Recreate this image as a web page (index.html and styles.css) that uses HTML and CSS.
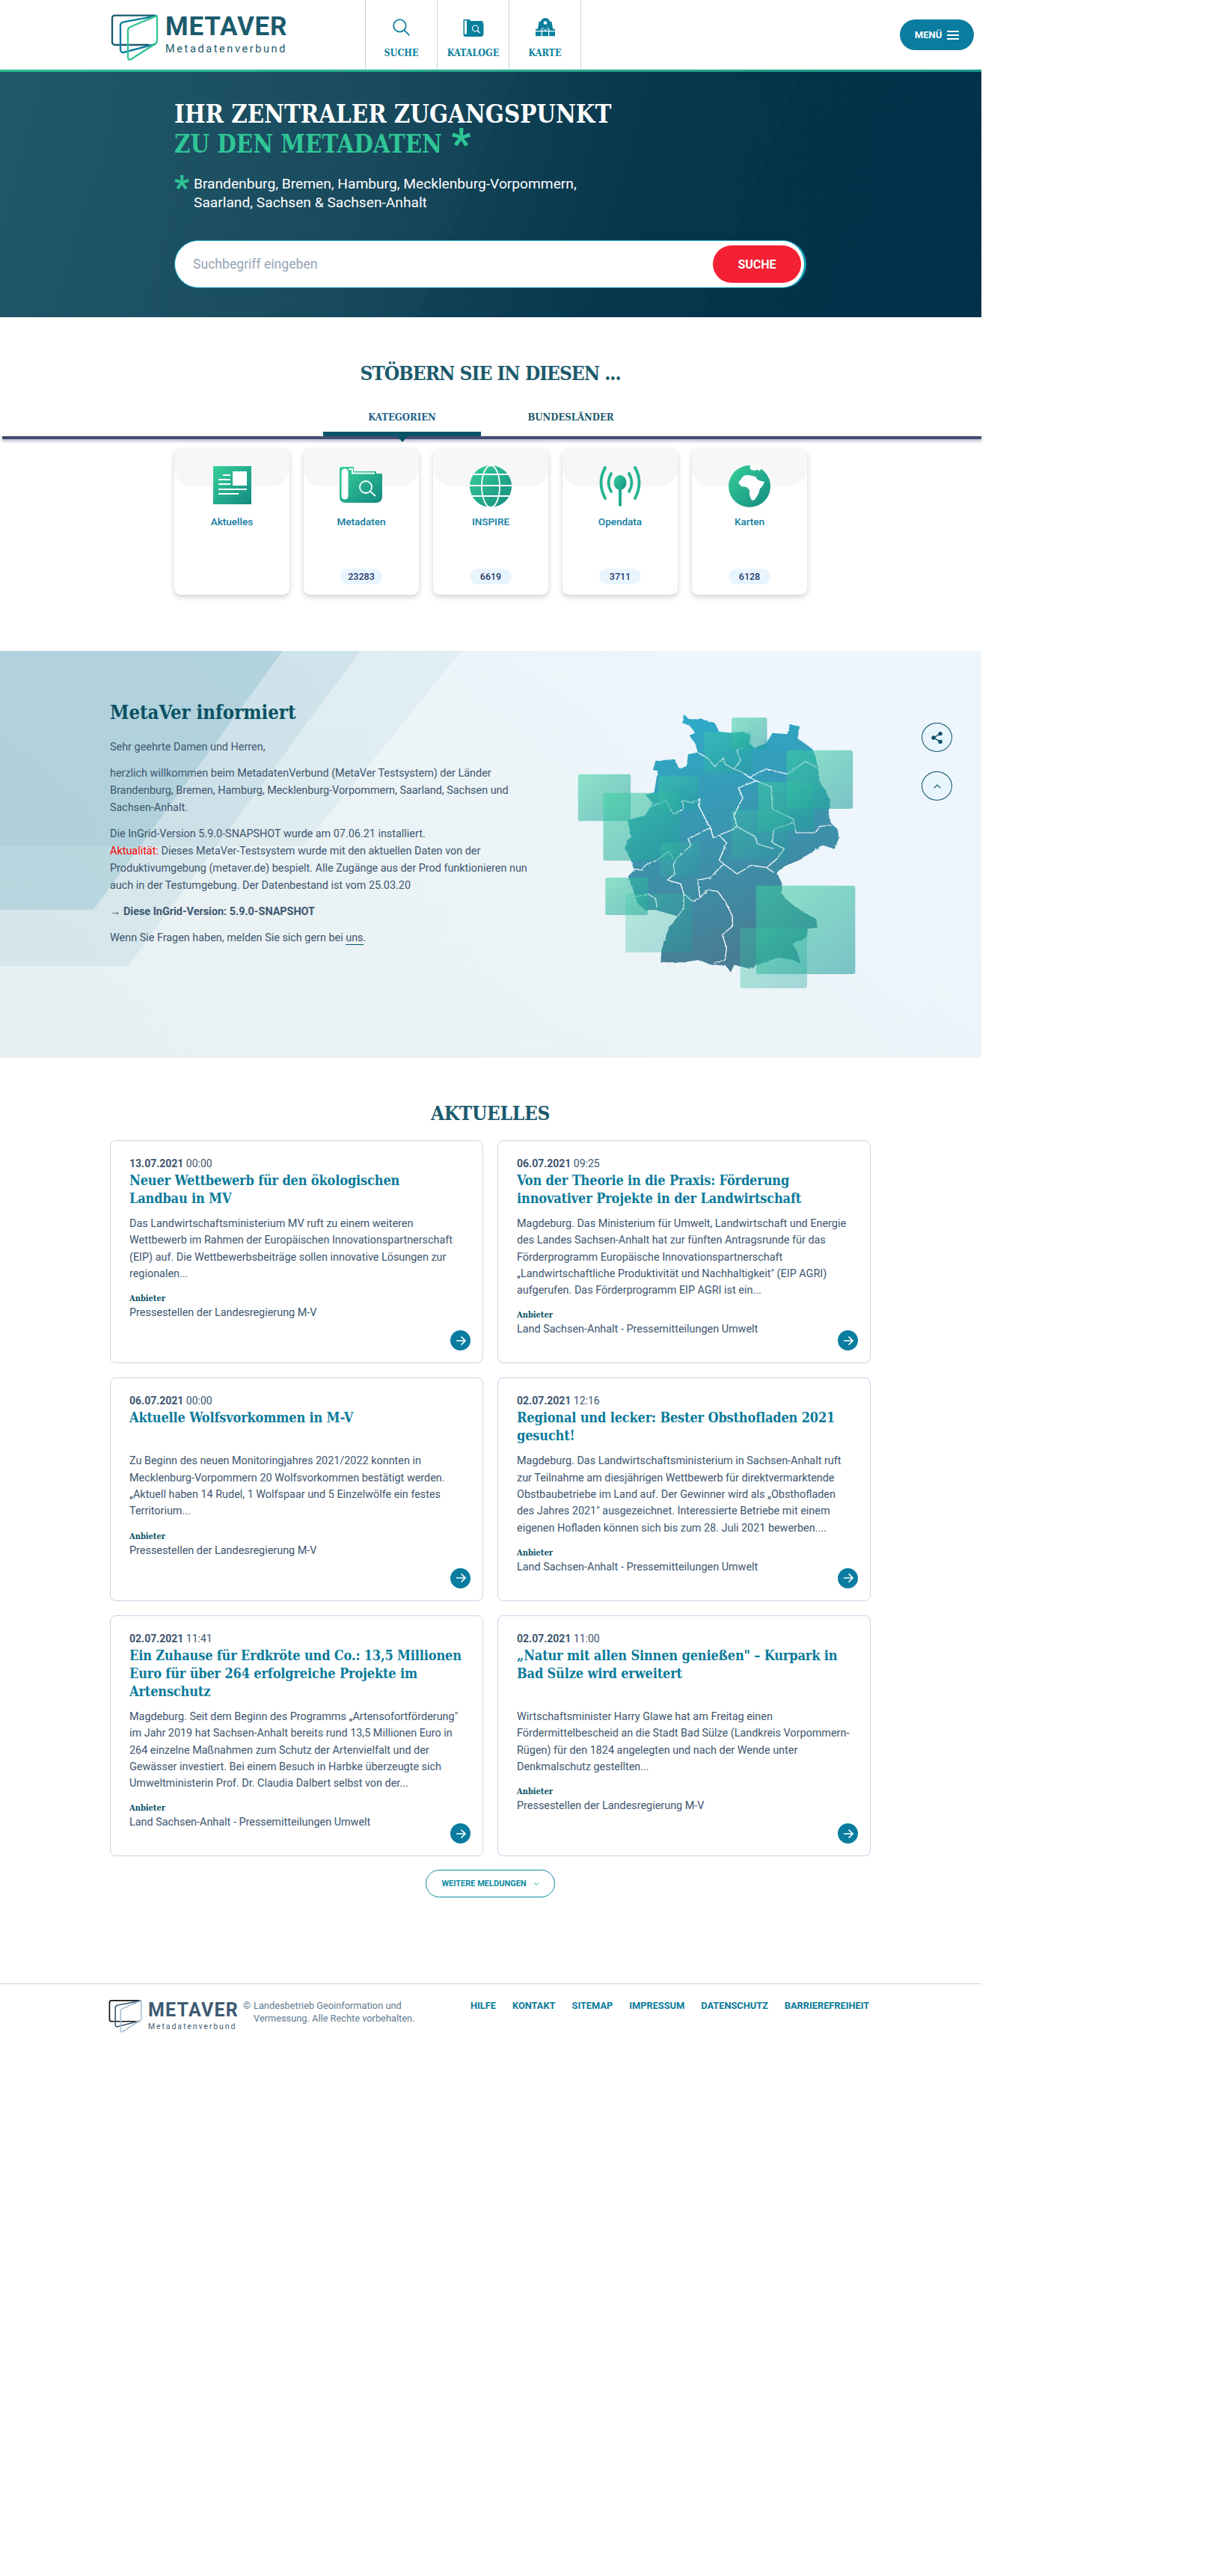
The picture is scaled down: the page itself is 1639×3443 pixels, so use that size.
FILE: index.html
```html
<!DOCTYPE html>
<html lang="de">
<head>
<meta charset="utf-8">
<title>MetaVer</title>
<link rel="stylesheet" href="styles.css">
</head>
<body>
<svg class="defs" aria-hidden="true"><defs>
<linearGradient id="g" x1="0" y1="0" x2="1" y2="1"><stop offset="0" stop-color="#38d09a"/><stop offset="1" stop-color="#128a80"/></linearGradient>
<linearGradient id="sq" x1="0" y1="0" x2="1" y2="1"><stop offset="0" stop-color="#3fd3a2"/><stop offset="1" stop-color="#1b9a9a"/></linearGradient>
<linearGradient id="de" gradientUnits="userSpaceOnUse" x1="420" y1="200" x2="700" y2="1120"><stop offset="0" stop-color="#2eaac8"/><stop offset="1" stop-color="#487d94"/></linearGradient>
<filter id="rough" x="-5%" y="-5%" width="110%" height="110%"><feTurbulence type="fractalNoise" baseFrequency="0.09" numOctaves="2" seed="4"/><feDisplacementMap in="SourceGraphic" scale="8"/></filter>
</defs></svg>
<div class="page">
<header class="top">
  <a class="logo">
    <svg class="logo-mark" viewBox="50 50 195 195"><path class="lm-dark" d="M232 58H68Q56 58 56 70V164Q56 176 68 176H205"/><path class="lm-blue" d="M232 60L102 84Q89 87 89 98V194Q89 208 102 206L232 172"/><path class="lm-green" d="M232 60L128 104Q119 108 119 118V226Q119 240 132 233L228 172Q236 167 236 158V68Q236 56 232 60Z"/></svg>
    <span class="logo-text"><b>METAVER</b><small>Metadatenverbund</small></span>
  </a>
  <nav class="mainnav">
    <a class="navitem"><svg viewBox="0 0 30 30" class="ni"><circle cx="12" cy="12" r="9.500" class="ni-line"/><path d="M19 19L27 27" class="ni-line"/></svg><span>SUCHE</span></a>
    <a class="navitem"><svg viewBox="0 0 27 26" class="ni"><path class="ni-fill" d="M0 2H9V4H25Q26 4 26 5V7H27V21Q27 25 23 25H3Q0 25 0 22Z"/><path class="ni-w" d="M1.500 3.500H4.500V21Q3 22 1.500 21.500Z"/><circle cx="16" cy="14" r="4" fill="none" stroke="#fff" stroke-width="1.200"/><path d="M19 17L22 20" stroke="#fff" stroke-width="1.200"/></svg><span>KATALOGE</span></a>
    <a class="navitem"><svg viewBox="0 0 28 28" class="ni"><path class="ni-fill" d="M5 5H8L10 14L14 19L18 14L20 5H23L25 16H28V26H0V16H3Z"/><path class="ni-fill" d="M14 0A7 7 0 0 1 21 7C21 11 16 15 14 18C12 15 7 11 7 7A7 7 0 0 1 14 0Z"/><circle cx="14" cy="7" r="2.500" fill="#fff"/><path d="M0 19H28M9 15V27M19 15V27" stroke="#fff" stroke-width="1.300"/></svg><span>KARTE</span></a>
  </nav>
  <button class="menu">MENÜ <span class="burger"><i></i><i></i><i></i></span></button>
</header>

<section class="hero">
  <h1>IHR ZENTRALER ZUGANGSPUNKT<br><em>ZU DEN METADATEN <span class="star">*</span></em></h1>
  <div class="sub"><span class="substar">*</span><p>Brandenburg, Bremen, Hamburg, Mecklenburg-Vorpommern,<br>Saarland, Sachsen &amp; Sachsen-Anhalt</p></div>
  <form class="search"><span class="ph">Suchbegriff eingeben</span><span class="go">SUCHE</span></form>
</section>

<section class="browse">
  <h2 class="sectitle">STÖBERN SIE IN DIESEN ...</h2>
  <div class="tabs"><a class="tab active">KATEGORIEN</a><a class="tab">BUNDESLÄNDER</a></div>
  <div class="rule"></div>
  <div class="cats">
    <a class="cat"><svg class="ci" viewBox="0 0 60 56"><rect x="5" y="1" width="51" height="51" fill="url(#g)"/><rect x="31" y="8" width="19" height="19" fill="#fff"/><path d="M18 13H28M12 19H28M12 25H28M12 32H50M12 38H39" stroke="#fff" stroke-width="2" fill="none"/></svg><span class="cl">Aktuelles</span></a>
    <a class="cat"><svg class="ci" viewBox="0 0 60 56"><path fill="url(#g)" d="M1 4Q1 2 3 2H20V8H50V11H58V41Q58 50 49 50H9Q1 50 1 42Z"/><rect x="3.500" y="4.500" width="9" height="41" rx="4.500" fill="#fff"/><path d="M13 5H18V10.500H48" stroke="#fff" stroke-width="2" fill="none"/><circle cx="36" cy="29" r="8" fill="none" stroke="#fff" stroke-width="1.800"/><path d="M42 35L49 41" stroke="#fff" stroke-width="1.800"/></svg><span class="cl">Metadaten</span><span class="count">23283</span></a>
    <a class="cat"><svg class="ci" viewBox="0 0 60 56"><circle cx="30" cy="28" r="28" fill="url(#g)"/><ellipse cx="30" cy="28" rx="12" ry="28" fill="none" stroke="#fff" stroke-width="1.800"/><path d="M3 12H57M1 27H59M3 41H57" stroke="#fff" stroke-width="1.800"/></svg><span class="cl">INSPIRE</span><span class="count">6619</span></a>
    <a class="cat"><svg class="ci" viewBox="0 0 60 56"><ellipse cx="30" cy="23" rx="8.500" ry="10" fill="url(#g)"/><path d="M30 28V53" stroke="#22ab8e" stroke-width="4" stroke-linecap="round"/><g fill="none" stroke="#26b390" stroke-width="3.800" stroke-linecap="round"><path d="M18 11Q11 23 18 35"/><path d="M42 11Q49 23 42 35"/><path d="M10 3Q-1 23 10 44"/><path d="M50 3Q61 23 50 44"/></g></svg><span class="cl">Opendata</span><span class="count">3711</span></a>
    <a class="cat"><svg class="ci" viewBox="0 0 60 56"><circle cx="30" cy="28" r="28" fill="url(#g)"/><path fill="#fff" d="M32 -1Q29 3 32 6L37 7Q42 4 43 8L46 4L44 -1Z"/><path fill="#fff" d="M22 14Q27 12 33 14L38 15Q40 20 46 21L50 22Q48 28 44 31L42 38L37 46L33 47L30 40L30 33L26 29L19 28L15 23Z"/></svg><span class="cl">Karten</span><span class="count">6128</span></a>
  </div>
</section>

<section class="info">
  <svg class="info-bg" viewBox="0 0 1312 544" preserveAspectRatio="none" aria-hidden="true">
    <polygon points="0,0 617,0 405,261 0,261" fill="#0a7896" opacity=".055"/>
    <polygon points="0,0 482,0 171,421 0,421" fill="#0a7896" opacity=".08"/>
    <polygon points="0,0 378,0 125,346 0,346" fill="#0a7896" opacity=".14"/>
  </svg>
  <div class="info-text">
    <h2>MetaVer informiert</h2>
    <p>Sehr geehrte Damen und Herren,</p>
    <p>herzlich willkommen beim MetadatenVerbund (MetaVer Testsystem) der Länder Brandenburg, Bremen, Hamburg, Mecklenburg-Vorpommern, Saarland, Sachsen und Sachsen-Anhalt.</p>
    <p>Die InGrid-Version 5.9.0-SNAPSHOT wurde am 07.06.21 installiert.<br><span class="red">Aktualität:</span> Dieses MetaVer-Testsystem wurde mit den aktuellen Daten von der Produktivumgebung (metaver.de) bespielt. Alle Zugänge aus der Prod funktionieren nun auch in der Testumgebung. Der Datenbestand ist vom 25.03.20</p>
    <p><span class="arr">→</span> <strong>Diese InGrid-Version: 5.9.0-SNAPSHOT</strong></p>
    <p>Wenn Sie Fragen haben, melden Sie sich gern bei <a class="ul">uns</a>.</p>
  </div>
  <svg class="map" viewBox="0 100 1100 1200" preserveAspectRatio="none" aria-label="Karte der Bundesländer">
    <g filter="url(#rough)">
      <path fill="url(#de)" d="M440 165L436 200L462 212L478 240L458 250L478 280L488 318L455 325L450 372L425 385L410 345L345 352L336 388L352 392L340 478L310 488L335 520L310 570L250 590L262 650L240 700L262 750L272 790L252 815L272 880L285 925L310 950L345 950L420 975L390 1020L365 1110L362 1160L440 1160L490 1150L535 1170L580 1170L600 1200L610 1170L665 1185L700 1165L760 1140L810 1150L835 1165L825 1120L808 1085L855 1060L860 1025L892 1020L888 985L855 965L815 935L785 905L770 880L775 850L755 800L780 775L830 750L870 720L910 690L950 705L965 660L960 625L940 605L930 570L935 510L920 470L900 440L895 385L885 330L875 305L850 282L825 262L832 215L800 205L790 245L740 240L720 280L680 300L660 280L665 250L640 235L600 240L560 235L545 200L500 185L458 185Z"/>
      <g fill="none" stroke="#fff" stroke-width="3.600" opacity=".95" class="borders">
        <path d="M490 320L520 340L545 375L575 340L580 365L610 385L635 395L665 420L680 405L720 385L790 405L850 355L880 370L895 385"/>
        <path d="M610 385L632 350L620 310L640 300"/>
        <path d="M665 420L685 432L625 460L640 500L610 570L620 615L600 630L560 650L540 660L530 620L520 600L490 530L495 505L470 520L435 510L440 545L405 565L380 510L320 540"/>
        <path d="M685 432L735 455L740 545L810 585L820 640L885 640L900 615L940 610"/>
        <path d="M810 600L745 625L740 680L780 705L755 745L720 780L745 800"/>
        <path d="M620 615L680 655L690 685L745 705"/>
        <path d="M560 650L585 680L560 750L575 765L620 805L670 770L720 780"/>
        <path d="M530 620L455 665L465 690L415 745L405 770L410 805L385 830L430 845L440 885L470 915L495 900L487 830L530 820L575 765"/>
        <path d="M405 745L390 715L350 750L310 770L300 790L270 785"/>
        <path d="M495 900L520 870L555 875L580 915L605 975L605 1015L570 1050L585 1100L580 1150L540 1165"/>
        <path d="M440 885L440 940L420 975"/>
        <path d="M270 900L320 885L345 905L350 940"/>
      </g>
    </g>
    <g fill="url(#sq)">
      <rect x="602" y="178" width="120" height="128" rx="8" opacity=".55"/>
      <rect x="510" y="237" width="158" height="165" rx="8" opacity=".4"/>
      <rect x="789" y="309" width="223" height="235" rx="8" opacity=".55"/>
      <rect x="692" y="437" width="188" height="197" rx="8" opacity=".5"/>
      <rect x="83" y="405" width="178" height="188" rx="8" opacity=".55"/>
      <rect x="168" y="480" width="258" height="272" rx="8" opacity=".55"/>
      <rect x="355" y="411" width="133" height="135" rx="8" opacity=".45"/>
      <rect x="362" y="680" width="130" height="135" rx="8" opacity=".3"/>
      <rect x="603" y="548" width="188" height="197" rx="8" opacity=".3"/>
      <rect x="175" y="820" width="144" height="150" rx="8" opacity=".55"/>
      <rect x="243" y="885" width="225" height="235" rx="8" opacity=".32"/>
      <rect x="685" y="852" width="335" height="355" rx="8" opacity=".55"/>
      <rect x="631" y="1023" width="226" height="240" rx="8" opacity=".35"/>
    </g>
  </svg>
  <a class="fab fab-share"><svg viewBox="0 0 20 20" width="18" height="18"><path d="M5 10L14 4M5 10L14 16" stroke="#0a4f68" stroke-width="1.500"/><circle cx="4.500" cy="10" r="3" fill="#0a4f68"/><circle cx="14.500" cy="4" r="3" fill="#0a4f68"/><circle cx="14.500" cy="16" r="3" fill="#0a4f68"/></svg></a>
  <a class="fab fab-up"><svg viewBox="0 0 14 10" width="12" height="8"><path d="M1.500 8L7 2.500L12.500 8" fill="none" stroke="#0a4f68" stroke-width="1.500"/></svg></a>
</section>

<section class="news">
  <h2 class="sectitle news-title">AKTUELLES</h2>
  <div class="newsgrid">
    <article class="nc"><div class="date"><b>13.07.2021</b> 00:00</div><h3>Neuer Wettbewerb für den ökologischen<br>Landbau in MV</h3><p class="txt">Das Landwirtschaftsministerium MV ruft zu einem weiteren Wettbewerb im Rahmen der Europäischen Innovationspartnerschaft (EIP) auf. Die Wettbewerbsbeiträge sollen innovative Lösungen zur regionalen...</p><div class="lab">Anbieter</div><div class="prov">Pressestellen der Landesregierung M-V</div><a class="arrow"><svg viewBox="0 0 16 16" width="16" height="16"><path d="M2 8H14M8.500 2.500L14 8L8.500 13.500" fill="none" stroke="#fff" stroke-width="1.700"/></svg></a></article>
    <article class="nc"><div class="date"><b>06.07.2021</b> 09:25</div><h3>Von der Theorie in die Praxis: Förderung<br>innovativer Projekte in der Landwirtschaft</h3><p class="txt">Magdeburg. Das Ministerium für Umwelt, Landwirtschaft und Energie des Landes Sachsen-Anhalt hat zur fünften Antragsrunde für das Förderprogramm Europäische Innovationspartnerschaft „Landwirtschaftliche Produktivität und Nachhaltigkeit" (EIP AGRI) aufgerufen. Das Förderprogramm EIP AGRI ist ein...</p><div class="lab">Anbieter</div><div class="prov">Land Sachsen-Anhalt - Pressemitteilungen Umwelt</div><a class="arrow"><svg viewBox="0 0 16 16" width="16" height="16"><path d="M2 8H14M8.500 2.500L14 8L8.500 13.500" fill="none" stroke="#fff" stroke-width="1.700"/></svg></a></article>
    <article class="nc"><div class="date"><b>06.07.2021</b> 00:00</div><h3>Aktuelle Wolfsvorkommen in M-V</h3><p class="txt">Zu Beginn des neuen Monitoringjahres 2021/2022 konnten in Mecklenburg-Vorpommern 20 Wolfsvorkommen bestätigt werden. „Aktuell haben 14 Rudel, 1 Wolfspaar und 5 Einzelwölfe ein festes Territorium...</p><div class="lab">Anbieter</div><div class="prov">Pressestellen der Landesregierung M-V</div><a class="arrow"><svg viewBox="0 0 16 16" width="16" height="16"><path d="M2 8H14M8.500 2.500L14 8L8.500 13.500" fill="none" stroke="#fff" stroke-width="1.700"/></svg></a></article>
    <article class="nc"><div class="date"><b>02.07.2021</b> 12:16</div><h3>Regional und lecker: Bester Obsthofladen 2021<br>gesucht!</h3><p class="txt">Magdeburg. Das Landwirtschaftsministerium in Sachsen-Anhalt ruft zur Teilnahme am diesjährigen Wettbewerb für direktvermarktende Obstbaubetriebe im Land auf. Der Gewinner wird als „Obsthofladen des Jahres 2021" ausgezeichnet. Interessierte Betriebe mit einem eigenen Hofladen können sich bis zum 28. Juli 2021 bewerben....</p><div class="lab">Anbieter</div><div class="prov">Land Sachsen-Anhalt - Pressemitteilungen Umwelt</div><a class="arrow"><svg viewBox="0 0 16 16" width="16" height="16"><path d="M2 8H14M8.500 2.500L14 8L8.500 13.500" fill="none" stroke="#fff" stroke-width="1.700"/></svg></a></article>
    <article class="nc tall"><div class="date"><b>02.07.2021</b> 11:41</div><h3>Ein Zuhause für Erdkröte und Co.: 13,5 Millionen<br>Euro für über 264 erfolgreiche Projekte im<br>Artenschutz</h3><p class="txt">Magdeburg. Seit dem Beginn des Programms „Artensofortförderung" im Jahr 2019 hat Sachsen-Anhalt bereits rund 13,5 Millionen Euro in 264 einzelne Maßnahmen zum Schutz der Artenvielfalt und der Gewässer investiert. Bei einem Besuch in Harbke überzeugte sich Umweltministerin Prof. Dr. Claudia Dalbert selbst von der...</p><div class="lab">Anbieter</div><div class="prov">Land Sachsen-Anhalt - Pressemitteilungen Umwelt</div><a class="arrow"><svg viewBox="0 0 16 16" width="16" height="16"><path d="M2 8H14M8.500 2.500L14 8L8.500 13.500" fill="none" stroke="#fff" stroke-width="1.700"/></svg></a></article>
    <article class="nc tall"><div class="date"><b>02.07.2021</b> 11:00</div><h3>„Natur mit allen Sinnen genießen" – Kurpark in<br>Bad Sülze wird erweitert</h3><p class="txt">Wirtschaftsminister Harry Glawe hat am Freitag einen Fördermittelbescheid an die Stadt Bad Sülze (Landkreis Vorpommern-Rügen) für den 1824 angelegten und nach der Wende unter Denkmalschutz gestellten...</p><div class="lab">Anbieter</div><div class="prov">Pressestellen der Landesregierung M-V</div><a class="arrow"><svg viewBox="0 0 16 16" width="16" height="16"><path d="M2 8H14M8.500 2.500L14 8L8.500 13.500" fill="none" stroke="#fff" stroke-width="1.700"/></svg></a></article>
  </div>
  <a class="more">WEITERE MELDUNGEN <svg viewBox="0 0 10 8" width="8" height="6"><path d="M1 1.500L5 6L9 1.500" fill="none" stroke="#0a8aa0" stroke-width="1.100"/></svg></a>
</section>

<footer class="foot">
  <a class="logo flogo">
    <svg class="logo-mark" viewBox="50 50 195 195"><path class="lm-k" d="M232 58H68Q56 58 56 70V164Q56 176 68 176H205"/><path class="lm-s" d="M232 60L102 84Q89 87 89 98V194Q89 208 102 206L232 172"/><path class="lm-l" d="M232 60L128 104Q119 108 119 118V226Q119 240 132 233L228 172Q236 167 236 158V68Q236 56 232 60Z"/></svg>
    <span class="logo-text"><b>METAVER</b><small>Metadatenverbund</small></span>
  </a>
  <p class="copy"><span class="c">©</span> Landesbetrieb Geoinformation und Vermessung. Alle Rechte vorbehalten.</p>
  <nav class="fnav"><a>HILFE</a><a>KONTAKT</a><a>SITEMAP</a><a>IMPRESSUM</a><a>DATENSCHUTZ</a><a>BARRIEREFREIHEIT</a></nav>
</footer>
</div>
</body>
</html>
```
FILE: styles.css
```css
*{box-sizing:border-box}
html,body{margin:0;padding:0;background:#fff}
body{font-family:Roboto,"Liberation Sans",sans-serif;color:#3b566c;font-size:14.400px}
a{color:inherit;text-decoration:none}
h1,h2,h3,p{margin:0}
.defs{width:0;height:0;display:block}
.page{width:1312px;min-height:3443px}

/* header */
.top{height:96px;display:flex;border-bottom:3px solid;border-image:linear-gradient(90deg,#2fbf94,#1a9a88) 1;position:relative}
.logo{display:flex;align-items:flex-start}
.top .logo{margin:18px 0 0 148px;width:340px}
.logo-mark{width:65px;height:65px;flex:none;fill:none;stroke-width:7;stroke-linejoin:round}
.lm-dark{stroke:#1c5a6c}.lm-blue{stroke:#0a7da0}.lm-green{stroke:#30c596}
.lm-k{stroke:#111}.lm-s{stroke:#3e5a72}.lm-l{stroke:#a9c0d4}
.logo-text{display:flex;flex-direction:column;margin-left:8px;color:#1c5a6c}
.logo-text b{font-size:35px;line-height:41px;letter-spacing:.800px;font-weight:700;margin-top:-3px}
.logo-text small{font-size:14.500px;line-height:18px;letter-spacing:2.600px;margin-top:1px;font-weight:400}
.mainnav{display:flex}
.navitem{width:96px;border-left:1px solid #c8d0e2;display:flex;flex-direction:column;align-items:center;font-family:"DejaVu Serif Condensed","DejaVu Serif",serif;font-weight:700;font-size:12.500px;color:#0a7f9b;padding-top:24px}
.navitem:last-child{border-right:1px solid #c8d0e2;width:97px}
.navitem span{margin-top:13px;line-height:16px}
.ni{height:26px;width:28px}
.ni-line{fill:none;stroke:#0a7f9b;stroke-width:2}
.ni-fill{fill:#0a7f9b}
.ni-w{fill:#fff}
.menu{margin:26px 10px 0 auto;height:41px;width:99px;border:0;border-radius:21px;background:#0a7c9f;color:#fff;font:700 13px Roboto,sans-serif;display:flex;align-items:center;justify-content:center;gap:7px}
.burger{display:flex;flex-direction:column;gap:3px;width:16px}
.burger i{display:block;height:2px;background:#fff}

/* hero */
.hero{height:328px;padding:37px 0 0 233px;color:#fff;background:linear-gradient(112deg,rgba(255,255,255,.012) 0 47.700%,transparent 47.800%),linear-gradient(112deg,rgba(255,255,255,.01) 0 74%,transparent 74.100%),linear-gradient(105deg,#1b5566 0,#14475a 35%,#033449 65%,#02324a 100%)}
.hero h1{font-family:"DejaVu Serif Condensed","DejaVu Serif",serif;font-weight:700;font-size:32.700px;line-height:40px}
.hero em{font-style:normal;color:#2fc596}
.star{font-family:Roboto,sans-serif;font-size:58px;line-height:0;vertical-align:-8px;font-weight:700;margin-left:2px}
.sub{display:flex;margin-top:20px;font-size:19.200px;line-height:25px}
.substar{width:26px;color:#2fc596;font-size:44px;font-weight:700;line-height:36px;height:25px}
.search{margin-top:38px;width:845px;height:64px;border:1px solid #12a0bd;border-right-width:3px;border-radius:32px;background:#fff;display:flex;align-items:center;justify-content:space-between;padding:0 4px 0 24px}
.ph{font-size:17.600px;color:#96a3b3}
.go{width:118px;height:50px;border-radius:25px;background:#f42034;color:#fff;font-weight:700;font-size:16px;display:flex;align-items:center;justify-content:center}

/* browse */
.browse{padding-top:52px}
.sectitle{font-family:"DejaVu Serif Condensed","DejaVu Serif",serif;font-weight:700;font-size:26px;letter-spacing:-1px;line-height:46px;color:#1c5a6c;text-align:center;width:1311px}
.tabs{display:flex;height:61px;padding-left:432px}
.tab{width:211px;height:61px;padding-top:27px;text-align:center;font-family:"DejaVu Serif Condensed","DejaVu Serif",serif;font-weight:700;font-size:13px;line-height:18px;color:#1c5a6c;position:relative}
.tab+.tab{width:240px}
.tab.active{color:#22608a;border-bottom:6px solid #0a5468}
.tab.active::after{content:"";position:absolute;left:50%;margin-left:-7px;top:61px;border:7px solid transparent;border-top:8px solid #0a5468;border-bottom:0;z-index:1}
.rule{height:4px;margin-left:3px;background:#434d70;box-shadow:0 2px 4px rgba(60,70,110,.5)}
.cats{display:flex;gap:19px;margin:13px 0 0 233px}
.cat{width:154px;height:195px;background:#fff;border-radius:9px;box-shadow:0 3px 7px rgba(40,40,60,.22);display:flex;flex-direction:column;align-items:center;padding:22px 0 14px;position:relative}
.cat::before{content:"";position:absolute;left:0;right:0;top:0;height:50px;background:#f7f7f7;border-radius:9px 9px 24px 24px}
.ci{width:60px;height:56px;position:relative;flex:none}
.cl{margin-top:10px;font-size:13.500px;font-weight:500;line-height:18px;color:#0f7d9f}
.count{margin-top:auto;width:56px;height:21px;border-radius:11px;background:#e9f5fe;font-size:12.500px;font-weight:500;line-height:21px;text-align:center;color:#27396b}

/* info */
.info{margin-top:75px;height:544px;position:relative;display:flex;padding:65px 0 0 147px;background:linear-gradient(40deg,#e7eff1 0,#ebf3f6 45%,#eef6fd 80%)}
.info-bg{position:absolute;left:0;top:0;width:100%;height:100%}
.info-text{position:relative;width:593px;padding-right:30px;font-size:14.400px;line-height:23px;color:#3d566f}
.info-text h2{font-family:"DejaVu Serif Condensed","DejaVu Serif",serif;font-weight:700;font-size:25.500px;line-height:34px;color:#0b5264;margin-bottom:18px}
.info-text p{margin-bottom:12px}
.arr{font-family:"Liberation Sans",sans-serif}
.red{color:#ff0000}
.ul{border-bottom:1px solid #0b5264}
.map{position:relative;width:435px;height:400px;margin-top:-2px;flex:none}
.fab{position:absolute;left:1232px;width:41px;height:39px;border:1.500px solid #0a4f68;border-radius:50%;background:#e9f5fd;display:flex;align-items:center;justify-content:center}
.fab-share{top:96px}
.fab-up{top:161px}

/* news */
.news{padding-top:52px}
.news .sectitle{line-height:44px;letter-spacing:-.3px}
.newsgrid{display:grid;grid-template-columns:499px 499px;gap:19px;margin:14px 0 0 147px}
.nc{position:relative;border:1px solid #c8d2e6;border-radius:8px;padding:21px 25px 33px;min-height:298px}
.date{font-size:14px;line-height:18px;color:#3d566f}
.date b{font-weight:700}
.nc h3{font-family:"DejaVu Serif Condensed","DejaVu Serif",serif;font-weight:700;font-size:18px;letter-spacing:-.150px;line-height:24px;color:#0a7a9a;min-height:48px;margin-top:2px;white-space:nowrap}
.tall h3{min-height:72px}
.txt{margin-top:11px;font-size:14.400px;line-height:22.300px;color:#3d566f}
.lab{margin-top:14px;font-family:"DejaVu Serif Condensed","DejaVu Serif",serif;font-weight:700;font-size:11px;line-height:16px;color:#0b5264}
.prov{font-size:14.400px;line-height:22px;color:#3d566f}
.arrow{position:absolute;right:16px;bottom:16px;width:27px;height:27px;border-radius:50%;background:#0a7c9f;display:flex;align-items:center;justify-content:center}
.more{display:flex;align-items:center;justify-content:center;gap:9px;width:173px;height:37px;margin:18px 0 0 569px;border:1px solid #0a8aa0;border-radius:19px;color:#0a8aa0;font-size:11px;font-weight:700}

/* footer */
.foot{margin-top:115px;border-top:1px solid #c8d2e6;display:flex;padding:20px 0 0 145px;height:90px}
.flogo .logo-mark{width:46px;height:46px}
.flogo .logo-text{margin-left:7px;color:#3e5a72}
.flogo .logo-text b{font-size:25px;line-height:29px;letter-spacing:1.200px;margin-top:0}
.flogo .logo-text small{font-size:10.500px;line-height:12px;letter-spacing:1.900px;margin-top:2px}
.copy{position:relative;width:236px;margin-left:6px;padding-left:14px;font-size:12.800px;line-height:17px;color:#5f7a90;height:34px}
.c{position:absolute;left:0}
.fnav{display:flex;gap:22px;margin-left:68px;font-size:12.800px;font-weight:700;color:#0a7a9a;line-height:18px}
```
